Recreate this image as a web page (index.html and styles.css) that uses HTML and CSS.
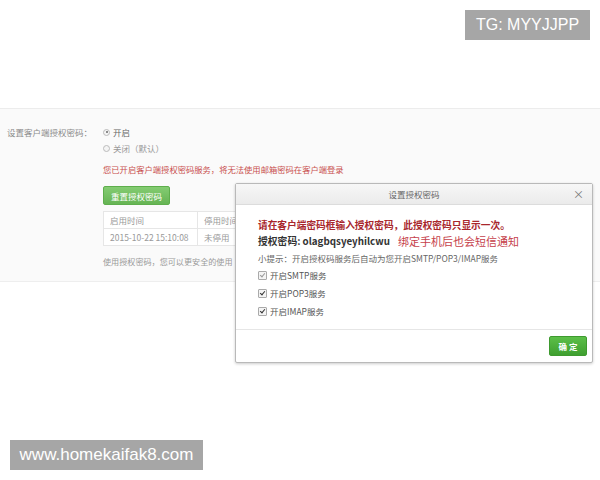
FILE: index.html
```html
<!DOCTYPE html>
<html lang="zh-CN">
<head>
<meta charset="utf-8">
<title>设置授权密码</title>
<link rel="stylesheet" href="styles.css">
</head>
<body>
<div class="top"></div>
<section class="panel">
  <div class="label">设置客户端授权密码：</div>
  <div class="content">
    <div class="radio-row"><span class="radio on"></span>开启</div>
    <div class="radio-row"><span class="radio"></span>关闭（默认）</div>
    <div class="warn">您已开启客户端授权密码服务，将无法使用邮箱密码在客户端登录</div>
    <button class="btn-reset">重置授权密码</button>
    <table class="tbl">
      <tr><th class="c1">启用时间</th><th class="c2">停用时间</th></tr>
      <tr><td class="c1">2015-10-22 15:10:08</td><td class="c2">未停用</td></tr>
    </table>
    <div class="note">使用授权密码，您可以更安全的使用</div>
  </div>
</section>

<div class="dialog">
  <div class="dlg-head">设置授权密码<span class="close">×</span></div>
  <div class="dlg-body">
    <div class="dlg-warn">请在客户端密码框输入授权密码，此授权密码只显示一次。</div>
    <div class="pwd"><b>授权密码: olagbqsyeyhilcwu</b><span class="sms">绑定手机后也会短信通知</span></div>
    <div class="tip">小提示：开启授权码服务后自动为您开启SMTP/POP3/IMAP服务</div>
    <div class="chk"><span class="box dim"></span><span>开启SMTP服务</span></div>
    <div class="chk"><span class="box"></span><span>开启POP3服务</span></div>
    <div class="chk"><span class="box"></span><span>开启IMAP服务</span></div>
  </div>
  <div class="dlg-foot"><button class="btn-ok">确 定</button></div>
</div>

<div class="wm wm-tg">TG: MYYJJPP</div>
<div class="wm wm-site">www.homekaifak8.com</div>
</body>
</html>
```
FILE: styles.css
```css
html, body {
  margin: 0;
  padding: 0;
  background: #fff;
  width: 600px;
  height: 480px;
  overflow: hidden;
  font-family: "Noto Sans CJK SC", "Noto Sans", sans-serif;
}
.top { height: 108px; }
.panel {
  display: flex;
  background: #fafafa;
  border-top: 1px solid #ececec;
  border-bottom: 1px solid #eeeeee;
  height: 174px;
  box-sizing: border-box;
  padding-top: 16px;
}
.label {
  width: 96px;
  padding-left: 7px;
  font-size: 8.5px;
  line-height: 14px;
  color: #8a8a8a;
}
.content {
  display: flex;
  flex-direction: column;
  align-items: flex-start;
  font-size: 8.5px;
  color: #888;
}
.radio-row {
  display: flex;
  align-items: center;
  height: 14px;
  margin-bottom: 2px;
  color: #666;
}
.radio {
  width: 7px;
  height: 7px;
  border: 1px solid #bbb;
  border-radius: 50%;
  background: #f4f4f4;
  margin-right: 3px;
  box-sizing: border-box;
  position: relative;
}
.radio.on::after {
  content: "";
  position: absolute;
  left: 1.5px; top: 1.5px;
  width: 2px; height: 2px;
  border-radius: 50%;
  background: #666;
}
.radio-row + .radio-row { color: #999; }
.warn {
  margin-top: 5px;
  height: 14px;
  line-height: 14px;
  font-size: 8.3px;
  color: #c9504e;
}
.btn-reset {
  margin-top: 10px;
  width: 67px;
  height: 19px;
  border: 1px solid #5eae4c;
  border-radius: 2px;
  background: linear-gradient(#84cc72, #66b454);
  color: #fff;
  font-family: inherit;
  font-size: 8.5px;
  padding: 0;
}
.tbl {
  margin-top: 6px;
  border-collapse: collapse;
  background: #fff;
  width: 240px;
}
.tbl th, .tbl td {
  border: 1px solid #e6e6e6;
  height: 16px;
  padding: 0 6px;
  font-weight: normal;
  text-align: left;
  color: #999;
  font-size: 8.5px;
  white-space: nowrap;
}
.tbl .c1 { width: 81px; }
.note {
  margin-top: 10px;
  font-size: 8.1px;
  line-height: 12px;
  color: #999;
  white-space: nowrap;
}

.dialog {
  position: absolute;
  left: 235px;
  top: 183px;
  width: 358px;
  height: 180px;
  box-sizing: border-box;
  border: 1px solid #b9b9b9;
  border-radius: 2px;
  background: #fff;
  box-shadow: 0 1px 3px rgba(0,0,0,0.2);
  display: flex;
  flex-direction: column;
}
.dlg-head {
  height: 20px;
  line-height: 20px;
  text-align: center;
  font-size: 8.5px;
  color: #666;
  background: linear-gradient(#f7f7f7, #ebebeb);
  border-bottom: 1px solid #dcdcdc;
  position: relative;
}
.close {
  position: absolute;
  right: 8px;
  top: 0;
  font-size: 11px;
  color: #777;
}
.dlg-body {
  flex: 1;
  padding: 13px 0 0 22px;
}
.dlg-warn {
  font-size: 9.7px;
  font-weight: bold;
  color: #a8262c;
  line-height: 15px;
}
.pwd {
  display: flex;
  align-items: center;
  height: 17px;
  line-height: 17px;
  font-size: 9.8px;
  color: #333;
}
.sms {
  margin-left: 8px;
  font-size: 11px;
  color: #c6414b;
}
.tip {
  height: 16px;
  line-height: 16px;
  font-size: 8.5px;
  color: #666;
}
.chk {
  display: flex;
  align-items: center;
  height: 18px;
  line-height: 12px;
  font-size: 8.5px;
  color: #555;
}
.box {
  width: 7px;
  height: 7px;
  border: 1px solid #aaa;
  border-radius: 1px;
  margin-right: 3px;
  background: #f4f4f4;
  position: relative;
}
.box::after {
  content: "";
  position: absolute;
  left: 2px;
  top: 0;
  width: 2px;
  height: 4px;
  border-right: 1.5px solid #333;
  border-bottom: 1.5px solid #333;
  transform: rotate(40deg);
}
.box.dim::after { border-color: #9a9a9a; }
.dlg-foot {
  height: 32px;
  border-top: 1px solid #e6e6e6;
  display: flex;
  justify-content: flex-end;
  align-items: center;
  padding-right: 5px;
}
.btn-ok {
  width: 38px;
  height: 20px;
  padding: 0;
  border: 1px solid #3e9a2f;
  border-radius: 2px;
  background: linear-gradient(#5cbf48, #3f9f30);
  color: #fff;
  font-weight: bold;
  font-family: inherit;
  font-size: 8.5px;
}

.wm {
  position: absolute;
  background: #a6a6a6;
  color: #fff;
  font-family: "Liberation Sans", Arial, sans-serif;
  font-size: 16px;
  display: flex;
  align-items: center;
  justify-content: center;
}
.wm-tg {
  left: 465px;
  top: 10px;
  width: 125px;
  height: 30px;
}
.wm-site {
  left: 10px;
  top: 440px;
  width: 193px;
  height: 30px;
  font-size: 17px;
}
```
